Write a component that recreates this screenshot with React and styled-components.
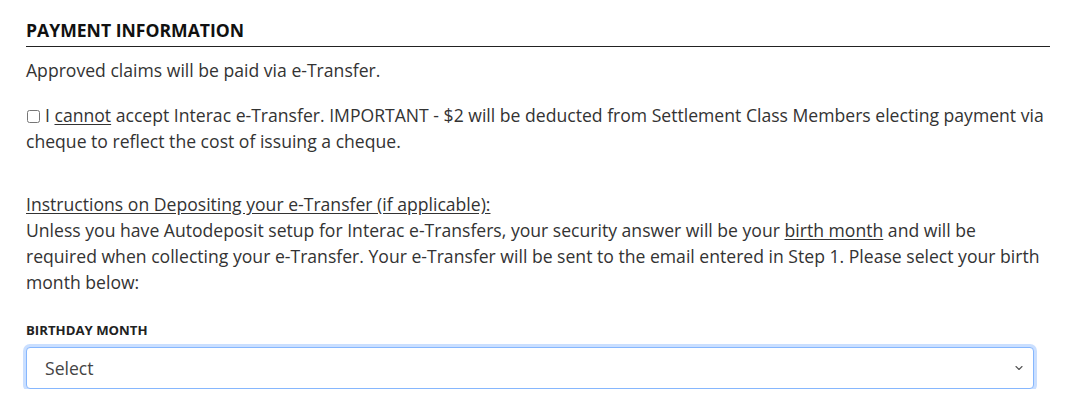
import React from "react";
import styled, { createGlobalStyle } from "styled-components";

const GlobalStyle = createGlobalStyle`
  body {
    margin: 0;
    background: #fff;
    font-family: "Open Sans", "Noto Sans", sans-serif;
    color: #333;
  }
`;

const Section = styled.section`
  width: 1024px;
  padding: 17px 0 0 26px;
`;

const Heading = styled.h2`
  margin: 0;
  font-size: 17.6px;
  line-height: 26px;
  font-weight: 700;
  color: #111;
  padding-bottom: 3px;
  border-bottom: 1px solid #222;
`;

const Para = styled.p`
  margin: ${(p) => p.$top || 0}px 0 0;
  font-size: 17.6px;
  line-height: 26px;
`;

const U = styled.span`
  text-decoration: underline;
  text-underline-offset: 2px;
`;

const Check = styled.input`
  width: 13px;
  height: 13px;
  margin: 0 5px 0 1px;
  vertical-align: -1px;
`;

const Label = styled.label`
  display: block;
  margin-top: 26px;
  font-size: 13.2px;
  line-height: 18px;
  font-weight: 700;
  color: #222;
`;

const SelectWrap = styled.div`
  width: 1008px;
  margin-top: 8px;
`;

const Select = styled.select`
  width: 100%;
  height: 42px;
  padding: 0 18px;
  font-family: "Open Sans", "Noto Sans", sans-serif;
  font-size: 17.6px;
  color: #444;
  background: #fff;
  border: 1px solid #86b7fe;
  border-radius: 4px;
  box-shadow: 0 0 0 3px rgba(13, 110, 253, 0.22);
  outline: none;
  appearance: none;
  background-image: url("data:image/svg+xml,%3csvg xmlns='http://www.w3.org/2000/svg' viewBox='0 0 16 16'%3e%3cpath fill='none' stroke='%23555' stroke-linecap='round' stroke-linejoin='round' stroke-width='1.5' d='M4 6l4 4 4-4'/%3e%3c/svg%3e");
  background-repeat: no-repeat;
  background-position: right 8px center;
  background-size: 12px 12px;
`;

export default function App() {
  return (
    <>
      <GlobalStyle />
      <Section>
        <Heading>PAYMENT INFORMATION</Heading>
        <Para $top={10}>Approved claims will be paid via e-Transfer.</Para>
        <Para $top={19}>
          <Check type="checkbox" />I <U>cannot</U> accept Interac e-Transfer. IMPORTANT - $2 will be
          deducted from Settlement Class Members electing payment via cheque to reflect the cost of
          issuing a cheque.
        </Para>
        <Para $top={37}>
          <U>Instructions on Depositing your e-Transfer (if applicable):</U>
          <br />
          Unless you have Autodeposit setup for Interac e-Transfers, your security answer will be your{" "}
          <U>birth month</U> and will be required when collecting your e-Transfer. Your e-Transfer
          will be sent to the email entered in Step 1. Please select your birth month below:
        </Para>
        <Label>BIRTHDAY MONTH</Label>
        <SelectWrap>
          <Select defaultValue="">
            <option value="">Select</option>
          </Select>
        </SelectWrap>
      </Section>
    </>
  );
}
